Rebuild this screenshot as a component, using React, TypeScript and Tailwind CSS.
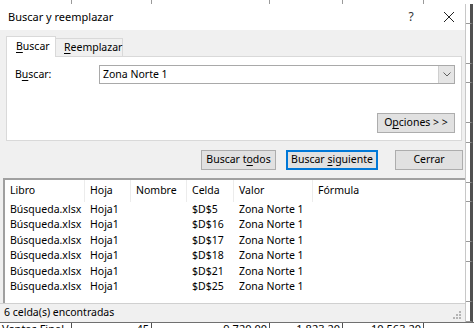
import React from 'react';

const font = { fontFamily: '"Noto Sans", "Open Sans", sans-serif' };

function U({ children }: { children: React.ReactNode }) {
  return <span className="underline underline-offset-2">{children}</span>;
}

const rows = [
  ['Búsqueda.xlsx', 'Hoja1', '', '$D$5', 'Zona Norte 1'],
  ['Búsqueda.xlsx', 'Hoja1', '', '$D$16', 'Zona Norte 1'],
  ['Búsqueda.xlsx', 'Hoja1', '', '$D$17', 'Zona Norte 1'],
  ['Búsqueda.xlsx', 'Hoja1', '', '$D$18', 'Zona Norte 1'],
  ['Búsqueda.xlsx', 'Hoja1', '', '$D$21', 'Zona Norte 1'],
  ['Búsqueda.xlsx', 'Hoja1', '', '$D$25', 'Zona Norte 1'],
];

const cols = [
  { label: 'Libro', w: 'w-[80px]' },
  { label: 'Hoja', w: 'w-[46px]' },
  { label: 'Nombre', w: 'w-[56px]' },
  { label: 'Celda', w: 'w-[47px]' },
  { label: 'Valor', w: 'w-[79px]' },
  { label: 'Fórmula', w: 'flex-1' },
];

function Btn({ children, primary, className }: { children: React.ReactNode; primary?: boolean; className: string }) {
  return (
    <div
      className={`h-[20px] flex items-center justify-center bg-[#e1e1e1] text-black whitespace-nowrap ${
        primary ? 'border-2 border-[#0078d7]' : 'border border-[#adadad]'
      } ${className}`}
    >
      <span>{children}</span>
    </div>
  );
}

export default function App() {
  return (
    <div className="w-[474px] h-[328px] overflow-hidden bg-white flex flex-col text-[10.5px]" style={font}>
      {/* sheet behind, top */}
      <div className="h-[4px] shrink-0 flex bg-white">
        <div className="w-[72px] border-r border-[#9a9a9a]" />
        <div className="w-[80px] border-r border-[#9a9a9a]" />
        <div className="w-[118px] border-r border-[#9a9a9a]" />
        <div className="w-[73px] border-r border-[#9a9a9a]" />
        <div className="w-[81px] border-r border-[#9a9a9a]" />
      </div>

      <div className="flex h-[318px] shrink-0">
        {/* dialog */}
        <div className="w-[466px] h-full flex flex-col bg-[#f0f0f0] border-r border-[#c8c8c8] text-black">
          <div className="h-[26px] bg-white flex items-center pl-[8px] shrink-0">
            <span className="flex-1 text-[11px]">Buscar y reemplazar</span>
            <span className="w-[20px] text-[12px] text-[#333] mr-[22px] text-center">?</span>
            <svg width="12" height="12" viewBox="0 0 12 12" className="mr-[10px]">
              <path d="M1 1 L11 11 M11 1 L1 11" stroke="#222" strokeWidth="1" />
            </svg>
          </div>

          {/* tabs */}
          <div className="flex items-end pl-[6px] mt-[6px] h-[20px] shrink-0">
            <div className="w-[50px] h-[21px] bg-white border border-b-0 border-[#d9d9d9] flex items-center pl-[9px] relative z-10 -mb-px">
              <span>
                <U>B</U>uscar
              </span>
            </div>
            <div className="w-[67px] h-[18px] bg-[#f0f0f0] border border-b-0 border-l-0 border-[#d9d9d9] flex items-center pl-[8px]">
              <span>
                <U>R</U>eemplazar
              </span>
            </div>
          </div>
          <div className="ml-[6px] mr-[3px] h-[85px] bg-white border border-[#d9d9d9] shrink-0 flex flex-col">
            <div className="flex items-center mt-[8px] pl-[8px] pr-[6px]">
              <span className="w-[84px]">
                B<U>u</U>scar:
              </span>
              <div className="flex-1 h-[19px] border border-[#a9a9a9] flex items-center">
                <span className="flex-1 pl-[3px]">Zona Norte 1</span>
                <div className="w-[16px] h-full bg-[#e5e5e5] border-l border-[#cfcfcf] flex items-center justify-center">
                  <svg width="8" height="5" viewBox="0 0 8 5">
                    <path d="M0.5 0.5 L4 4 L7.5 0.5" stroke="#606060" fill="none" strokeWidth="1" />
                  </svg>
                </div>
              </div>
            </div>
            <div className="flex justify-end mt-[29px] pr-[6px]">
              <Btn className="w-[78px]">
                O<U>p</U>ciones &gt; &gt;
              </Btn>
            </div>
          </div>

          {/* action buttons */}
          <div className="flex mt-[9px] pr-[2px] shrink-0 justify-end">
            <Btn className="w-[75px]">
              Buscar t<U>o</U>dos
            </Btn>
            <Btn primary className="w-[92px] ml-[10px]">
              Buscar <U>s</U>iguiente
            </Btn>
            <Btn className="w-[68px] ml-[17px]">Cerrar</Btn>
          </div>

          {/* results list */}
          <div className="mt-[8px] ml-[3px] h-[125px] bg-white border-t-2 border-l-2 border-[#a0a0a0] shrink-0 flex flex-col">
            <div className="flex h-[22px] items-center shrink-0">
              {cols.map((c, i) => (
                <div
                  key={c.label}
                  className={`${c.w} h-full flex items-center pl-[5px] ${i < 5 ? 'border-r border-[#ececec]' : ''}`}
                >
                  {c.label}
                </div>
              ))}
            </div>
            {rows.map((r) => (
              <div key={r[3]} className="flex h-[15.5px] items-center">
                {r.map((v, i) => (
                  <div key={i} className={`${cols[i].w} shrink-0 pl-[5px] whitespace-nowrap overflow-hidden`}>
                    {v}
                  </div>
                ))}
              </div>
            ))}
          </div>

          {/* status bar */}
          <div className="flex-1 flex items-center pl-[4px] border-t border-[#d0d0d0] relative">
            <span>6 celda(s) encontradas</span>
            <svg width="10" height="10" viewBox="0 0 10 10" className="absolute right-[3px] bottom-[2px]">
              <g fill="#b4b4b4">
                <rect x="7" y="1" width="2" height="2" />
                <rect x="4" y="4" width="2" height="2" />
                <rect x="7" y="4" width="2" height="2" />
                <rect x="1" y="7" width="2" height="2" />
                <rect x="4" y="7" width="2" height="2" />
                <rect x="7" y="7" width="2" height="2" />
              </g>
            </svg>
          </div>
        </div>

        {/* sheet behind, right */}
        <div className="flex-1 flex flex-col bg-white">
          {[20, 40, 19, 40, 20, 40, 19, 40, 20, 40, 20].map((h, i) => (
            <div key={i} style={{ height: h }} className="border-b border-[#9a9a9a] border-r-[3px] border-r-[#505050] mr-[1px]" />
          ))}
        </div>
      </div>

      {/* sheet behind, bottom */}
      <div className="flex-1 flex bg-white border-t border-[#707070] text-[11px] text-black overflow-hidden">
        <div className="w-[72px] border-r border-[#505050] pl-[2px] whitespace-nowrap leading-[10px] pt-[1px]">Ventas Final</div>
        <div className="w-[80px] border-r border-[#505050] text-right pr-[2px] leading-[10px] pt-[1px]">45</div>
        <div className="w-[118px] border-r border-[#505050] text-right pr-[2px] leading-[10px] pt-[1px]">9,720.00</div>
        <div className="w-[73px] border-r border-[#505050] text-right pr-[2px] leading-[10px] pt-[1px]">1,823.20</div>
        <div className="w-[81px] border-r border-[#505050] text-right pr-[2px] leading-[10px] pt-[1px]">10,563.20</div>
        <div className="flex-1" />
      </div>
    </div>
  );
}
